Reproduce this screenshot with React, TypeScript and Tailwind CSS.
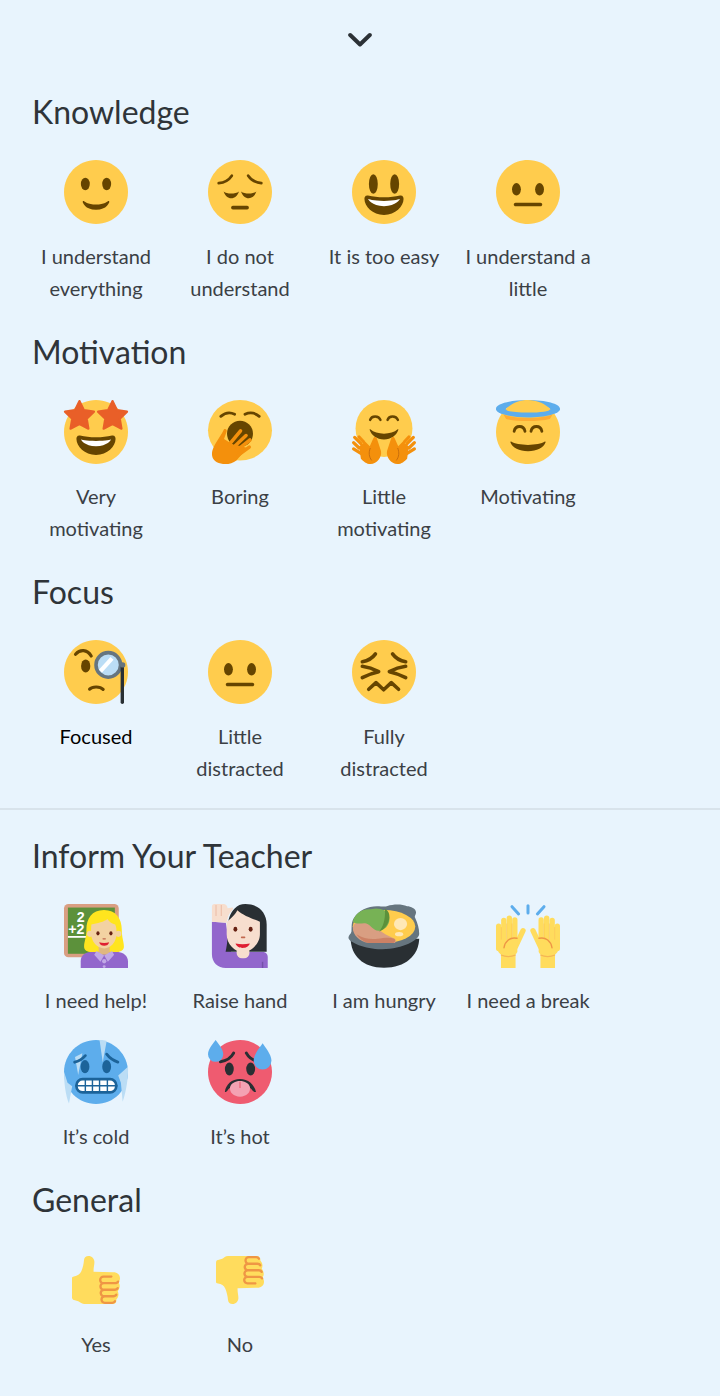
import React from 'react';

const BROWN = '#664500';

const FACE = 'M36 18c0 9.941-8.059 18-18 18-9.94 0-18-8.059-18-18C0 8.06 8.06 0 18 0c9.941 0 18 8.06 18 18';
const THUMB_BODY =
  'M0 16.5C0 15.8.5 15.500 1.500 15.300 4 14.800 6 14 7 11.500 8 9 8.800 6 9 3 9.200 1 10.500 0 12.300 0 15 0 16.800 2 16.800 4.500 16.800 7 16 9 16.200 11.800L31 12.200C34 12.200 36 14 36 16.700 36 18 35.500 19 35 20 35.700 21 36 22 35.700 23.500 35.300 25 34.800 26 34.300 26.500 34.800 27.500 35 28.500 34.700 30 34.300 31.500 33.800 32 33.300 32.500 33.500 34.500 32.500 36 30.500 36H9C7 36 6 34.500 4.700 34L1.500 33C.5 33 0 32 0 31Z';
const THUMB_FINGERS =
  'M23.02 21.249h8.604c1.17 0 2.268-.626 2.866-1.633.246-.415.109-.952-.307-1.199-.415-.247-.952-.108-1.199.307-.283.479-.806.775-1.361.775h-8.81c-.873 0-1.583-.71-1.583-1.583s.71-1.583 1.583-1.583H28.7c.483 0 .875-.392.875-.875s-.392-.875-.875-.875h-5.888c-1.838 0-3.333 1.495-3.333 3.333 0 1.025.475 1.932 1.205 2.544-.615.605-.998 1.445-.998 2.373 0 1.028.478 1.938 1.212 2.549-.611.604-.99 1.441-.99 2.367 0 1.12.559 2.108 1.409 2.713-.524.589-.852 1.356-.852 2.204 0 1.838 1.495 3.333 3.333 3.333h5.484c1.17 0 2.269-.625 2.867-1.632.247-.415.11-.952-.305-1.199-.416-.245-.953-.11-1.199.305-.285.479-.808.776-1.363.776h-5.484c-.873 0-1.583-.71-1.583-1.583s.71-1.583 1.583-1.583h6.506c1.17 0 2.27-.626 2.867-1.633.247-.416.11-.953-.305-1.199-.419-.251-.954-.11-1.199.305-.289.487-.799.777-1.363.777h-7.063c-.873 0-1.583-.711-1.583-1.584s.71-1.583 1.583-1.583h8.091c1.17 0 2.269-.625 2.867-1.632.247-.415.11-.952-.305-1.199-.417-.246-.953-.11-1.199.305-.289.486-.8.776-1.363.776H23.02c-.873 0-1.583-.71-1.583-1.583s.709-1.584 1.583-1.584z';
const BIG_MOUTH = 'M18 21c-3.623 0-6.027-.422-9-1-.679-.131-2 0-2 2 0 4 4.595 9 11 9 6.404 0 11-5 11-9 0-2-1.321-2.132-2-2-2.973.578-5.377 1-9 1z';

function star(cx: number, cy: number, r: number) {
  const pts: string[] = [];
  for (let i = 0; i < 10; i++) {
    const rad = i % 2 === 0 ? r : r * 0.5;
    const a = (Math.PI / 5) * i - Math.PI / 2;
    pts.push(`${(cx + rad * Math.cos(a)).toFixed(2)},${(cy + rad * Math.sin(a)).toFixed(2)}`);
  }
  return pts.join(' ');
}

function Svg({ children, size = 64 }: { children: React.ReactNode; size?: number }) {
  return (
    <svg width={size} height={size} viewBox="0 0 36 36" className="block overflow-visible">
      {children}
    </svg>
  );
}

const Smile = () => (
  <Svg>
    <path fill="#FFCC4D" d={FACE} />
    <ellipse fill={BROWN} cx="12" cy="13.5" rx="2.5" ry="3.5" />
    <ellipse fill={BROWN} cx="24" cy="13.5" rx="2.5" ry="3.5" />
    <path fill={BROWN} d="M10.515 23.621C10.56 23.8 11.683 28 18 28c6.318 0 7.44-4.2 7.485-4.379.055-.217-.043-.442-.237-.554-.195-.111-.439-.078-.6.077C24.629 23.163 22.694 25 18 25s-6.63-1.837-6.648-1.855C11.256 23.05 11.128 23 11 23c-.084 0-.169.021-.246.064-.196.112-.294.339-.239.557z" />
  </Svg>
);

const Pensive = () => (
  <Svg>
    <path fill="#FFCC4D" d={FACE} />
    <g fill="none" stroke={BROWN} strokeWidth="1.5" strokeLinecap="round">
      <path d="M6 13C9 12.7 11.8 11.2 13.4 8.8" />
      <path d="M30 13C27 12.7 24.2 11.2 22.6 8.8" />
    </g>
    <path fill={BROWN} d="M8.800 17.700C10.500 19.300 15.500 19.300 17.400 17.700 16.700 20 15 21.500 13.100 21.500S9.500 20 8.800 17.700z" />
    <path fill={BROWN} d="M18.600 17.700C20.500 19.300 25.500 19.300 27.200 17.700 26.500 20 24.800 21.500 22.900 21.500S19.300 20 18.600 17.700z" />
    <rect x="13" y="25.800" width="10" height="2" rx="1" fill={BROWN} />
  </Svg>
);

const Grin = () => (
  <Svg>
    <path fill="#FFCC4D" d={FACE} />
    <ellipse fill={BROWN} cx="12" cy="13.5" rx="2.5" ry="5.5" />
    <ellipse fill={BROWN} cx="24" cy="13.5" rx="2.5" ry="5.5" />
    <path fill={BROWN} d={BIG_MOUTH} />
    <path fill="#FFF" d="M9 22s3 1 9 1 9-1 9-1-2 4-9 4-9-4-9-4z" />
  </Svg>
);

const Neutral = () => (
  <Svg>
    <path fill="#FFCC4D" d={FACE} />
    <ellipse fill={BROWN} cx="11.5" cy="16.5" rx="2.5" ry="3.5" />
    <ellipse fill={BROWN} cx="24.5" cy="16.5" rx="2.5" ry="3.5" />
    <path fill={BROWN} d="M25 25H11c-.552 0-1-.447-1-1s.448-1 1-1h14c.553 0 1 .447 1 1s-.447 1-1 1z" transform="translate(0 1)" />
  </Svg>
);

const StarStruck = () => (
  <Svg>
    <path fill="#FFCC4D" d={FACE} />
    <path fill={BROWN} d={BIG_MOUTH} />
    <path fill="#FFF" d="M9.500 22.200s3 .8 8.500 .8 8.500-.8 8.500-.8-2 3.800-8.500 3.800-8.500-3.800-8.500-3.800z" />
    <g fill="#E95F28" stroke="#E95F28" strokeWidth="1.200" strokeLinejoin="round">
      <polygon points={star(8.7, 9.2, 8.600)} />
      <polygon points={star(27.3, 9.2, 8.600)} />
    </g>
  </Svg>
);

const Yawn = () => (
  <Svg>
    <ellipse cx="18" cy="17" rx="18" ry="17" fill="#FFCC4D" />
    <g fill="none" stroke={BROWN} strokeWidth="1.6" strokeLinecap="round">
      <path d="M7.2 9.2C9.5 7.2 12.5 6.8 15 8" />
      <path d="M20.8 8C23.5 6.8 26.5 7.2 28.8 9.2" />
    </g>
    <circle cx="18" cy="19" r="7.3" fill={BROWN} />
    <path fill="#F4900C" d="M9 16.5c.8-.6 1.8 0 1.5 1.2L9 22l5 3 5 1 3 1-6 7c-3 2.5-8 2.5-11 1-3-1.5-3.4-5-2-8 1.5-3.5 5-8 6-10.5z" />
    <g stroke="#F4900C" strokeWidth="2" strokeLinecap="round">
      <path d="M12 25L18.3 17.4" />
      <path d="M14 27L21.4 20" />
      <path d="M16 28.5L23.6 22.5" />
      <path d="M17 31L23.2 26.5" />
    </g>
  </Svg>
);

const HandHalf = () => (
  <g fill="#F4900C">
    <path d="M5 24.5L1.5 21" stroke="#F4900C" strokeWidth="1.8" strokeLinecap="round" />
    <path d="M6.5 23.5L4 20.8" stroke="#F4900C" strokeWidth="1.8" strokeLinecap="round" />
    <path d="M4 27L0.9 24" stroke="#F4900C" strokeWidth="1.8" strokeLinecap="round" />
    <path d="M5 30L0.9 27.5" stroke="#F4900C" strokeWidth="1.8" strokeLinecap="round" />
    <path d="M4 26L7.5 23.5 10 26 12 21.5c.4-1 1.6-1 2 .2l2.3 7C17 32 14 36 10.5 36c-2.5 0-4-1.5-5.5-3z" />
    <path d="M10.3 27c-1 2.500-.8 5 .8 7" fill="none" stroke="#C1690C" strokeWidth=".5" />
  </g>
);

const OpenHands = () => (
  <Svg>
    <circle cx="18" cy="16" r="16" fill="#FFCC4D" />
    <g fill="none" stroke={BROWN} strokeWidth="1.400" strokeLinecap="round">
      <path d="M10.200 11.200c.8-2.600 4.800-2.600 5.800 0" />
      <path d="M20 11.200c.8-2.600 4.800-2.600 5.800 0" />
    </g>
    <path fill={BROWN} d="M10.300 16.500c3.500 3.300 11.900 3.300 15.400 0 .3-.2.500.1.400.3C25 20 22 22.200 18 22.200s-7-2.200-8.100-5.400c-.1-.2.100-.5.400-.3z" />
    <HandHalf />
    <g transform="matrix(-1 0 0 1 36 0)">
      <HandHalf />
    </g>
  </Svg>
);

const Halo = () => (
  <Svg>
    {/* back of the ring goes behind the head, front goes over it */}
    <path fillRule="evenodd" fill="#5DADEC" d="M18 0C8 0 0 2.200 0 4.900s8 4.900 18 4.900 18-2.200 18-4.900S28 0 18 0zm0 3.200c7 0 12.400 .8 12.400 2s-5.400 1.900-12.400 1.900-12.400-.7-12.400-1.900 5.400-2 12.400-2z" />
    <path fill="#FFCC4D" d={FACE} />
    <path fill="#FFAC33" d="M4.200 8.200C10 10.800 26 10.800 31.800 8.200L30.300 10.700C24 12.200 12 12.200 5.700 10.700z" />
    <path fill="#5DADEC" d="M0 4.900c0 2.700 8 4.900 18 4.900s18-2.200 18-4.900c-1 0-5.600 .3-5.600 .3 0 1.200-5.400 1.900-12.400 1.900S5.600 6.400 5.600 5.200c0 0-4.600-.3-5.600-.3z" />
    <g fill="none" stroke={BROWN} strokeWidth="1.600" strokeLinecap="round">
      <path d="M10.200 17.600c.7-3.600 5.400-3.600 6.100 0" />
      <path d="M19.700 17.600c.7-3.600 5.400-3.600 6.100 0" />
    </g>
    <path fill={BROWN} d="M8.500 23.400c3.500 2.500 15.500 2.500 19 0 .3-.1.500.1.400.4C26.800 27 23 28.800 18 28.800s-8.800-1.800-9.900-5c-.1-.3.100-.5.400-.4z" />
  </Svg>
);

const Monocle = () => (
  <Svg>
    <path fill="#FFCC4D" d={FACE} />
    <g fill="none" stroke={BROWN} strokeWidth="1.800" strokeLinecap="round">
      <path d="M6.500 8C9 5.200 13 5.200 15.300 9" />
      <path d="M14.400 27.600C16 26 20.300 26 22 27.800" />
    </g>
    <ellipse cx="12.200" cy="14.600" rx="2.600" ry="3.700" fill={BROWN} />
    <circle cx="24.900" cy="14" r="6.900" fill="#BBDDF5" stroke="#66757F" strokeWidth="2" />
    <path d="M20.500 17.500L27 10.300" stroke="#FFF" strokeWidth="2.400" />
    <path d="M32.800 14.500V35" stroke="#292F33" strokeWidth="1.900" strokeLinecap="round" />
    <circle cx="33" cy="14" r="1.500" fill="#66757F" />
  </Svg>
);

const Confounded = () => (
  <Svg>
    <path fill="#FFCC4D" d={FACE} />
    <g fill="none" stroke={BROWN} strokeWidth="2" strokeLinecap="round" strokeLinejoin="round">
      <path d="M5.800 12.200C8.500 11.800 11.500 10.200 13.200 7.800" />
      <path d="M30.200 12.200C27.500 11.800 24.500 10.200 22.800 7.800" />
      <path d="M5.800 14.800C9 15.200 12 16.200 15 17.800 12 18.400 9 19.500 5.800 21.200" />
      <path d="M30.200 14.800C27 15.200 24 16.200 21 17.800 24 18.400 27 19.500 30.200 21.200" />
      <path d="M9.400 27.700L13.500 24 17.800 28 22.100 24 26.200 27.700" />
    </g>
  </Svg>
);

const Teacher = () => (
  <Svg>
    <rect width="30.800" height="30" rx="2.500" fill="#D99E82" />
    <rect x="2.200" y="2" width="26.400" height="26" fill="#5C913B" />
    <text fill="#FFF" fontFamily="'Liberation Sans', sans-serif" fontSize="8" fontWeight="700">
      <tspan x="7.200" y="10.200">2</tspan>
      <tspan x="2.400" y="17">+2</tspan>
    </text>
    <rect x="2.200" y="18" width="11" height="1" fill="#FFF" />
    <path fill="#9266CC" d="M9.400 36v-4c0-3 2.600-5 5.600-5h15c3.300 0 6 2.200 6 5.400V36z" />
    <path fill="#FFE51E" d="M22.500 3.400c6.800 0 10 5 10 11 0 4.500 1.200 7 1.200 9.600 0 2-2 3-4.400 3H15.500c-2.400 0-4.200-1-4.200-3 0-2.600 1.300-5 1.300-9.600 0-6 3-11 9.900-11z" />
    <rect x="19.500" y="22" width="6.200" height="6.500" fill="#E0B780" />
    <path fill="#C1A8E6" d="M18.300 26.500L22.600 29 20.500 32.500 17 28.500zM27 26.500L22.600 29 24.700 32.500 28.200 28.500z" />
    <circle cx="22.600" cy="32.200" r="1.200" fill="#C1A8E6" />
    <circle cx="22.600" cy="35.200" r=".8" fill="#C1A8E6" />
    <circle cx="14.600" cy="16.800" r="1.700" fill="#F3D2A2" />
    <circle cx="30.600" cy="16.800" r="1.700" fill="#F3D2A2" />
    <path fill="#F3D2A2" d="M15.400 11.500c3.200-.5 7.500-1.500 9-3 1 1.800 2.900 2.700 4.400 3 .6 1 .8 3.500.8 5 0 5-3.500 8.500-7 8.500s-7.400-3.500-7.400-8.500c0-1.700.1-4 .2-5z" />
    <ellipse cx="19.100" cy="16.500" rx=".9" ry="1.200" fill="#662113" />
    <ellipse cx="26.400" cy="16.500" rx=".9" ry="1.200" fill="#662113" />
    <rect x="21.600" y="19.200" width="2" height=".8" rx=".4" fill="#C1694F" />
    <path fill="#DF1F32" d="M19.800 21.500c1.600.5 4 .5 5.600 0-.3 1.300-1.400 2-2.800 2s-2.500-.7-2.800-2z" />
  </Svg>
);

const RaiseHand = () => (
  <Svg>
    <path fill="#9266CC" d="M2.200 10L10 10.500 13 27H31c1.500 0 2.600 1.200 2.600 2.800V36H10c-4.500 0-7.800-3.300-7.800-7.800z" />
    <rect x="30.300" y="32.500" width=".8" height="3.500" fill="#7450A8" />
    <path fill="#292F33" d="M21 0c7 0 12 4.500 12 11.500V26.800H9.900C11 22 11 19 11 14c0-5 1.500-9 4-11.500C16.700 .8 18.500 0 21 0z" />
    <rect x="16.100" y="24" width="7.200" height="6.500" rx="3" fill="#F7DECE" />
    <path fill="#F7DECE" d="M16.500 3.500C15.500 5.500 13 8.300 10.500 10V17c0 5.500 4.500 10 9 10s9.700-4.500 9.700-10V10C26 8.500 19.500 6.500 16.500 3.500z" />
    <path fill="#F7DECE" d="M2.200 1.500C2.200.6 2.800 0 3.700 0h5C10 0 11 1 11 2.400l2.900-.4c.6.800-.5 2-1.500 3-.7.700-1.200 2-1.900 5.500L2.200 10z" />
    <g stroke="#EEC2AD" strokeWidth=".7">
      <path d="M4.500 .5V6.700" />
      <path d="M7.500 .5V6.700" />
    </g>
    <ellipse cx="15.400" cy="14.200" rx="1.100" ry="1.400" fill="#662113" />
    <ellipse cx="24" cy="14.200" rx="1.100" ry="1.400" fill="#662113" />
    <rect x="18.500" y="18.300" width="2.500" height=".9" rx=".4" fill="#C1694F" />
    <path fill="#DF1F32" d="M15.500 22.200c2.600.6 5.400.6 8 0-.4 1.500-2 2.500-4 2.500s-3.600-1-4-2.500z" />
  </Svg>
);

const Stew = () => (
  <Svg>
    <path fill="#292F33" d="M-0.800 19.500H37.800C37.500 29 30 35.800 18 35.800S-.500 29-.800 19.500z" />
    <path fill="#66757F" d="M1.200 7.800C3.500 3.800 9 1.300 14 1.300c3 0 4.500.5 6-.2 3-1 8-1.300 11 .2 2 0 5 1.500 5 3.300 0 1.500-1 2-.5 3.200 1.500 3.300 2.300 6 2.300 9 0 3.600-9 8.500-20.800 8.700C8 25.700-2 21.500-2 19c0-1.500 1.500-2 1.700-3.500.2-3-.2-5.300 1.500-7.700z" />
    <ellipse cx="18" cy="12.700" rx="17.600" ry="9.300" fill="#FFCC4D" />
    <path fill="#D99E82" d="M.500 13.500C.700 10.800 3 9.500 6 9.500c3.500 0 6 2 8 4 3 2.800 7 4.800 10 6 1 .7 1 2.300-.5 2.500H9c-4.500-1-8.700-4.500-8.500-8.500z" />
    <path fill="#C1694F" opacity=".55" d="M2.500 17c4 2.500 8 3 12 2.500 3-.3 6.500-1 9.300 0 .8.800.5 2.300-.8 2.500H9c-2.500-.8-5-2.500-6.500-5z" />
    <path fill="#77B255" d="M.5 10C1.500 5.500 5.500 3 9.500 3c1.500 0 2.500-.500 4-.500 3.500 0 7 1.500 7.500 5 .5 3-1.500 7-5.500 7.500-3.500.5-4.500-3-7.500-4C6 10.300 3 12 .5 10z" />
    <path fill="#5C913B" d="M18.500 2.700c2 1 2.700 3 2.500 5-.3 3-2.200 6.500-5.800 7.800 2-2 3.800-6.500 3.300-12.800z" />
    <ellipse cx="27.300" cy="11.300" rx="3.700" ry="3.400" fill="#FFE8B6" />
    <ellipse cx="26.500" cy="17" rx="2.300" ry="1.200" fill="#FFE8B6" />
  </Svg>
);

const HandOpen = () => (
  <g>
    <g stroke="#FFDC5D" strokeWidth="3" strokeLinecap="round">
      <path d="M1.500 12.400V25" />
      <path d="M4.400 9.300V24" />
      <path d="M7.500 8V24" />
      <path d="M10.600 9V24" />
      <path d="M11 24L15.200 15" />
    </g>
    <path fill="#FFDC5D" d="M0 20H12V27L11 28.500V36H2.800V28.500C1 27 0 25 0 22z" />
    <g stroke="#FFAC33" strokeWidth=".5" opacity=".4">
      <path d="M3 13V20" />
      <path d="M6 11V20" />
      <path d="M9 11V20" />
    </g>
    <path d="M4.500 24.600c.5-3.500 3.500-6.300 7.300-5.300" fill="none" stroke="#EF9645" strokeWidth=".8" strokeLinecap="round" />
    <path d="M2.800 28.700c2.400 1 5.800 1 8.200 0" fill="none" stroke="#F5B554" strokeWidth=".7" />
  </g>
);

const RaisingHands = () => (
  <Svg>
    <g stroke="#5DADEC" strokeWidth="1.700" strokeLinecap="round">
      <path d="M9 1.500L12.700 5.600" />
      <path d="M18 1V5" />
      <path d="M27 1.500L23.300 5.600" />
    </g>
    <HandOpen />
    <g transform="matrix(-1 0 0 1 36 0)">
      <HandOpen />
    </g>
  </Svg>
);

const Cold = () => (
  <Svg>
    <path fill="#5DADEC" d={FACE} />
    <g fill="#BBDDF5">
      <path d="M20 0c1.500 0 3 .2 4 .5L21.800 12.500z" />
      <path d="M6.200 9.500L10.300 7.500 8 19.700z" />
      <path d="M0 17.800c0 6 .8 13 2.800 17.900L4.600 26 2 24z" />
      <path d="M30.500 20L36 15c.3 5-.8 13.500-3 19.700L32 24z" />
    </g>
    <g fill="none" stroke="#1C6399" strokeWidth="1.600" strokeLinecap="round">
      <path d="M6 12.500C8.500 12 10.500 10.500 12 8.800" />
      <path d="M24 8C25.500 10 27.500 11.500 30.300 12.400" />
    </g>
    <ellipse cx="11.800" cy="15" rx="2.500" ry="3.700" fill="#1C6399" />
    <ellipse cx="24" cy="15" rx="2.500" ry="3.700" fill="#1C6399" />
    <rect x="7" y="22" width="22.400" height="7.500" rx="3.500" fill="#FFF" stroke="#1C6399" strokeWidth="1.500" />
    <g stroke="#1C6399" strokeWidth=".8">
      <path d="M6.500 25.700H30" />
      <path d="M12 22V29.500" />
      <path d="M16 22V29.500" />
      <path d="M20 22V29.500" />
      <path d="M24.400 22V29.500" />
    </g>
  </Svg>
);

const Hot = () => (
  <Svg>
    <path fill="#EF5B70" d={FACE} />
    <g fill="none" stroke="#292F33" strokeWidth="1.700" strokeLinecap="round">
      <path d="M7 12.200C10 11.800 13 10 14.400 7.400" />
      <path d="M21.600 7.400C23 10 26 11.800 29 12.200" />
    </g>
    <ellipse cx="12" cy="16.300" rx="2.500" ry="3.600" fill="#292F33" />
    <ellipse cx="24" cy="16.300" rx="2.500" ry="3.600" fill="#292F33" />
    <path fill="#292F33" d="M9.500 29.200C10 25 13.500 22 18 22s8 3 9 7.200c-.8.300-1.500-.2-2-.8C24 26.500 21 25.300 18 25.300s-6 1.200-7 3.100c-.4.600-1 1-1.500.8z" />
    <path fill="#F4A2B3" d="M12.400 26.500C13 24.300 15.300 23 18 23s5 1.300 5.600 3.500c.5 3-2 5.400-5.600 5.400s-6.100-2.400-5.600-5.400z" />
    <path d="M18 23.500V27" stroke="#EA596E" strokeWidth=".6" />
    <path fill="#5DADEC" d="M4.300 0c1.200 1.800 4.300 5 4.300 8a4.300 4.300 0 1 1-8.600 0c0-3 3.100-6.200 4.300-8z" />
    <path fill="#5DADEC" d="M30.700 1.800c1.400 2.200 5 6.200 5 9.800a5 5 0 1 1-10 0c0-3.600 3.600-7.600 5-9.800z" />
  </Svg>
);

const ThumbUp = () => (
  <div className="flex h-16 w-16 items-center justify-center">
    <Svg size={48}>
      <path fill="#FFDC5D" d={THUMB_BODY} />
      <path fill="#EF9645" d={THUMB_FINGERS} transform="translate(.8 0)" />
    </Svg>
  </div>
);

const ThumbDown = () => (
  <div className="flex h-16 w-16 items-center justify-center">
    <Svg size={48}>
      <g transform="matrix(1 0 0 -1 0 36)">
        <path fill="#FFDC5D" d={THUMB_BODY} />
        <path fill="#EF9645" d={THUMB_FINGERS} transform="translate(.8 0)" />
      </g>
    </Svg>
  </div>
);

type Item = { label: string; icon: React.ReactNode; active?: boolean };

function Reaction({ label, icon, active }: Item) {
  return (
    <div className="flex w-36 flex-col items-center px-2">
      <div className="h-16 w-16">{icon}</div>
      <div className={`mt-4 text-center text-xl leading-8 ${active ? 'text-black' : 'text-[#3b4045]'}`}>{label}</div>
    </div>
  );
}

function Section({ title, items }: { title: string; items: Item[] }) {
  return (
    <section>
      <h2 className="px-8 text-[32px] leading-[48px] text-[#2f3439]">{title}</h2>
      <div className="mt-6 flex flex-wrap gap-y-6 px-6">
        {items.map((item) => (
          <Reaction key={item.label} {...item} />
        ))}
      </div>
    </section>
  );
}

export default function App() {
  return (
    <div className="min-h-screen bg-[#E8F4FD] pb-9 font-['Lato',sans-serif]">
      <div className="flex h-20 items-center justify-center">
        <svg width="24" height="16" viewBox="0 0 24 16" fill="none" stroke="#2c3136" strokeWidth="4" strokeLinecap="round" strokeLinejoin="round">
          <path d="M2.200 3L12 12.500 21.800 3" />
        </svg>
      </div>
      <div className="mt-2 flex flex-col gap-6">
        <Section
          title="Knowledge"
          items={[
            { label: 'I understand everything', icon: <Smile /> },
            { label: 'I do not understand', icon: <Pensive /> },
            { label: 'It is too easy', icon: <Grin /> },
            { label: 'I understand a little', icon: <Neutral /> },
          ]}
        />
        <Section
          title="Motivation"
          items={[
            { label: 'Very motivating', icon: <StarStruck /> },
            { label: 'Boring', icon: <Yawn /> },
            { label: 'Little motivating', icon: <OpenHands /> },
            { label: 'Motivating', icon: <Halo /> },
          ]}
        />
        <Section
          title="Focus"
          items={[
            { label: 'Focused', icon: <Monocle />, active: true },
            { label: 'Little distracted', icon: <Neutral /> },
            { label: 'Fully distracted', icon: <Confounded /> },
          ]}
        />
      </div>
      <div className="mt-6 h-0.5 bg-[#D8E3EB]" />
      <div className="mt-[22px] flex flex-col gap-6">
        <Section
          title="Inform Your Teacher"
          items={[
            { label: 'I need help!', icon: <Teacher /> },
            { label: 'Raise hand', icon: <RaiseHand /> },
            { label: 'I am hungry', icon: <Stew /> },
            { label: 'I need a break', icon: <RaisingHands /> },
            { label: 'It’s cold', icon: <Cold /> },
            { label: 'It’s hot', icon: <Hot /> },
          ]}
        />
        <Section
          title="General"
          items={[
            { label: 'Yes', icon: <ThumbUp /> },
            { label: 'No', icon: <ThumbDown /> },
          ]}
        />
      </div>
    </div>
  );
}
